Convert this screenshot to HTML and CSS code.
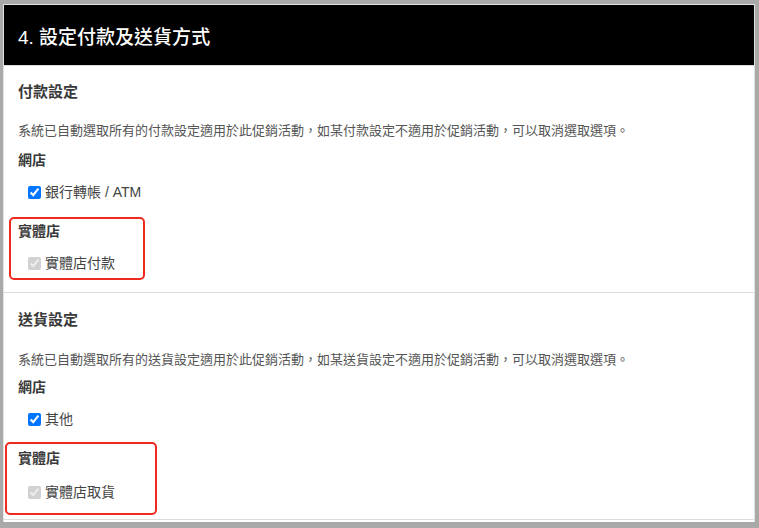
FILE: index.html
```html
<!DOCTYPE html>
<html lang="zh-Hant">
<head>
    <meta charset="UTF-8">
    <title>設定付款及送貨方式</title>
    <link rel="stylesheet" href="styles.css">
</head>
<body>
    <div class="card">
        <header class="card-header">
            <h1>4. 設定付款及送貨方式</h1>
        </header>

        <section class="setting">
            <h2>付款設定</h2>
            <p class="hint">系統已自動選取所有的付款設定適用於此促銷活動，如某付款設定不適用於促銷活動，可以取消選取選項。</p>
            <h3>網店</h3>
            <label class="option"><input type="checkbox" checked> 銀行轉帳 / ATM</label>
            <h3 class="store-title">實體店</h3>
            <label class="option"><input type="checkbox" checked disabled> 實體店付款</label>
            <span class="mark mark-payment"></span>
        </section>

        <section class="setting setting-delivery">
            <h2>送貨設定</h2>
            <p class="hint">系統已自動選取所有的送貨設定適用於此促銷活動，如某送貨設定不適用於促銷活動，可以取消選取選項。</p>
            <h3>網店</h3>
            <label class="option"><input type="checkbox" checked> 其他</label>
            <h3 class="store-title">實體店</h3>
            <label class="option option-last"><input type="checkbox" checked disabled> 實體店取貨</label>
            <span class="mark mark-delivery"></span>
        </section>
    </div>
</body>
</html>
```

FILE: styles.css
```css
html, body {
    height: 100%;
}

body {
    margin: 0;
    padding: 4px 4px 0 3px;
    box-sizing: border-box;
    background-color: #a9a9a9;
    font-family: 'Liberation Sans', 'Noto Sans CJK TC', sans-serif;
    color: #444;
    overflow: hidden;
}

.card {
    background: #fff;
    border: 1px solid #e2e2e2;
    border-bottom: none;
    padding-bottom: 2px;
}

.card-header {
    background-color: #000;
    height: 60px;
    display: flex;
    align-items: center;
    padding: 0 14px;
    border-bottom: 1px solid #ddd;
}

.card-header h1 {
    margin: 0;
    color: #fff;
    font-size: 19px;
    font-weight: 500;
}

.setting {
    position: relative;
    padding: 16px 14px 19px;
    border-bottom: 1px solid #ddd;
    display: flex;
    flex-direction: column;
    align-items: flex-start;
}

.setting-delivery {
    padding-top: 17px;
    padding-bottom: 17px;
}

.setting h2 {
    margin: 0;
    font-size: 15px;
    line-height: 20px;
    font-weight: 600;
    color: #3a3a3a;
}

.hint {
    margin: 19px 0 0;
    font-size: 13px;
    line-height: 20px;
    color: #555;
}

.setting-delivery .hint {
    margin-top: 20px;
}

.setting h3 {
    margin: 9px 0 0;
    font-size: 14px;
    line-height: 20px;
    font-weight: 600;
    color: #3a3a3a;
}

.setting-delivery .hint + h3 {
    margin-top: 7px;
}

.setting h3.store-title {
    margin-top: 19px;
}

.option {
    margin: 12px 0 0 10px;
    display: flex;
    align-items: center;
    gap: 4px;
    font-size: 14px;
    line-height: 20px;
    color: #444;
}

.option-last {
    margin-top: 14px;
}

.option input {
    margin: 0;
    width: 13px;
    height: 13px;
}

.mark {
    position: absolute;
    border: 2px solid #ee2a1f;
    border-radius: 5px;
    box-sizing: border-box;
    pointer-events: none;
}

.mark-payment {
    top: 151px;
    left: 5px;
    width: 136px;
    height: 63px;
}

.mark-delivery {
    top: 149px;
    left: 1px;
    width: 152px;
    height: 73px;
}
```
